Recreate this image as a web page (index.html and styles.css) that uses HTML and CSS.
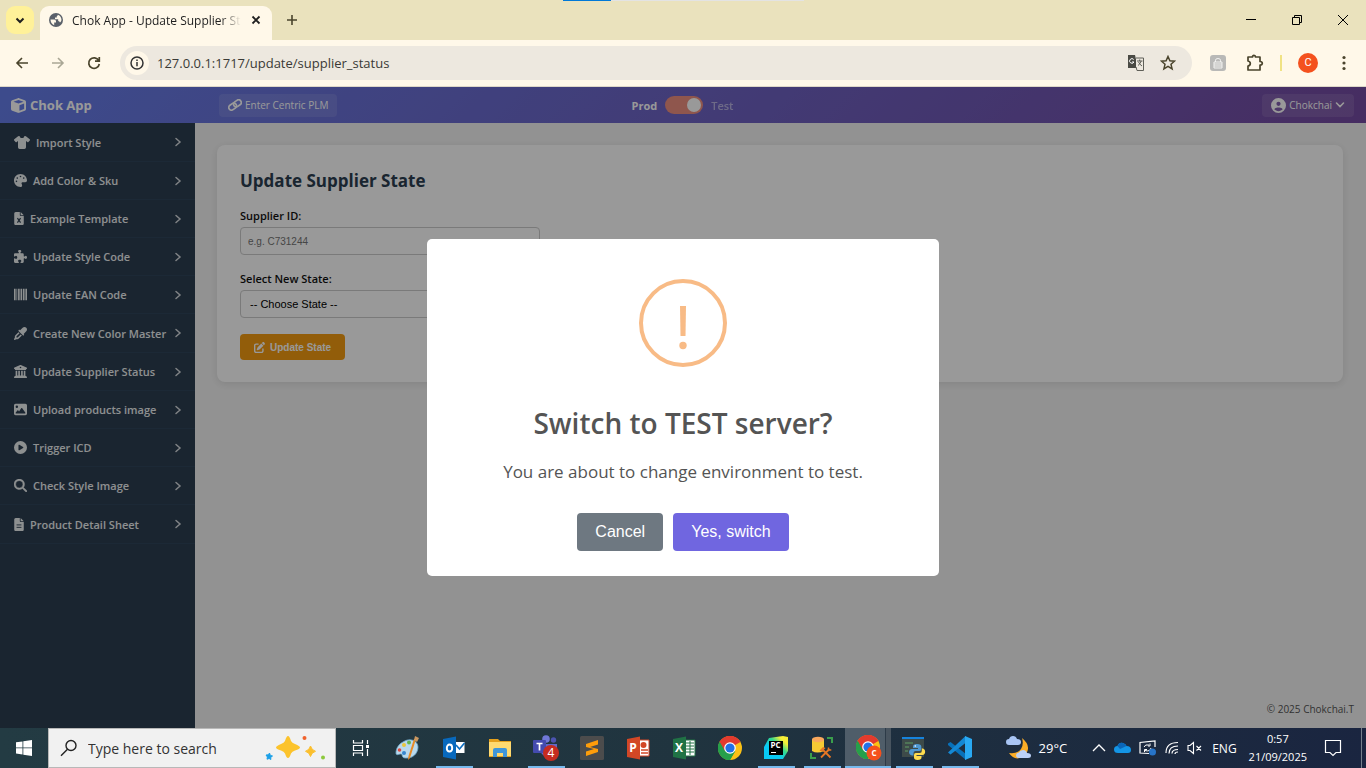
FILE: index.html
```html
<!DOCTYPE html>
<html lang="en">
<head>
<meta charset="utf-8">
<title>Chok App - Update Supplier State</title>
<link rel="stylesheet" href="styles.css">
</head>
<body>
<svg class="defs" aria-hidden="true">
  <symbol id="file" viewBox="0 0 384 512"><path d="M0 64C0 28.7 28.7 0 64 0H224V128c0 17.7 14.3 32 32 32H384V448c0 35.3-28.7 64-64 64H64c-35.3 0-64-28.7-64-64zM384 128H256V0z"/></symbol>
  <symbol id="chev" viewBox="0 0 8 12"><path d="M2 2.500l4 3.500L2 9.500" fill="none" stroke="currentColor" stroke-width="1.500" stroke-linecap="round"/></symbol>
  <symbol id="chrome" viewBox="0 0 24 24"><circle cx="12" cy="12" r="12" fill="#fbc116"/><path d="M12 12L1.600 6A12 12 0 0 1 22.400 6z" fill="#e33b2e"/><path d="M1.600 6A12 12 0 0 0 12 24l5.200-9L12 12z" fill="#269f4b"/><path d="M1.600 6A12 12 0 0 1 22.400 6H12L6.800 15z" fill="#e33b2e"/><path d="M1.600 6A12 12 0 0 0 12 24l5.200-9H6.800z" fill="#269f4b"/><circle cx="12" cy="12" r="5.800" fill="#fff"/><circle cx="12" cy="12" r="4.600" fill="#2371e7"/></symbol>
</svg>

<div class="tabstrip">
  <div class="load-track"><span></span></div>
  <button class="tab-search" aria-label="Search tabs"><svg width="10" height="10" viewBox="0 0 10 10"><path d="M1.500 3.500L5 7l3.500-3.500" fill="none" stroke="#1f1f1f" stroke-width="2"/></svg></button>
  <div class="tab">
    <svg width="14" height="14" viewBox="0 0 14 14"><circle cx="7" cy="7" r="7" fill="#5a6069"/><path d="M1.500 6.500h3.700q1.800 0 1.800 1.700v1.300h-1.800v2.700Q1.500 10.500 1.500 6.500zM8.800 1.800q3.600 1.300 3.700 5.200-.3 1.800-1.500 2.500-.4-1.500-1.800-1.500V6.300H6V4.500h1.800V3q1 0 1-1.200z" fill="#fff8e9"/></svg>
    <span class="tab-title">Chok App - Update Supplier State</span>
    <button class="plain" aria-label="Close tab"><svg width="10" height="10" viewBox="0 0 10 10"><path d="M1.500 1.500l7 7m0-7l-7 7" stroke="#1f1f1f" stroke-width="1.800"/></svg></button>
  </div>
  <button class="plain newtab" aria-label="New tab"><svg width="12" height="12" viewBox="0 0 12 12"><path d="M6 1v10M1 6h10" stroke="#4a442c" stroke-width="1.600"/></svg></button>
  <div class="window-buttons">
    <button class="plain" aria-label="Minimize"><svg width="12" height="12" viewBox="0 0 12 12"><path d="M1 5.500h10" stroke="#000"/></svg></button>
    <button class="plain" aria-label="Restore"><svg width="12" height="12" viewBox="0 0 12 12"><path d="M1.500 3.500h7v7h-7zM3.500 3.500v-2h7v7h-2" fill="none" stroke="#000"/></svg></button>
    <button class="plain" aria-label="Close"><svg width="12" height="12" viewBox="0 0 12 12"><path d="M1 1l10 10M11 1L1 11" stroke="#000"/></svg></button>
  </div>
</div>

<div class="toolbar">
  <button class="plain nav" aria-label="Back"><svg width="14" height="14" viewBox="0 0 14 14"><path d="M13 7H2M7 2L2 7l5 5" fill="none" stroke="#4a442c" stroke-width="1.600"/></svg></button>
  <button class="plain nav" aria-label="Forward"><svg width="14" height="14" viewBox="0 0 14 14"><path d="M1 7h11M7 2l5 5-5 5" fill="none" stroke="#aaa795" stroke-width="1.600"/></svg></button>
  <button class="plain nav" aria-label="Reload"><svg width="14" height="14" viewBox="0 0 14 14"><path d="M11.700 4.500A5.300 5.300 0 1 0 12.300 8M12.300 1v4.200H8" fill="none" stroke="#4a442c" stroke-width="1.700"/></svg></button>
  <div class="omnibox">
    <span class="site-info"><svg width="14" height="14" viewBox="0 0 14 14"><circle cx="7" cy="7" r="6" fill="none" stroke="#333" stroke-width="1.500"/><path d="M7 6v4.200M7 3.600v1.500" stroke="#333" stroke-width="1.500"/></svg></span>
    <input class="url" aria-label="Address" value="127.0.0.1:1717/update/supplier_status">
    <svg width="18" height="18" viewBox="0 0 18 18"><path d="M1 1h7l3 13H1z" fill="#4a4a44"/><path d="M9 4h7.500v12.500H10L9 13" fill="#ede8df" stroke="#5f5f58"/><path d="M6.700 5.500A2.300 2.300 0 1 0 7 8H5" fill="none" stroke="#fff"/><path d="M10 7h5.500M12.700 5.500V7m1.500 0q-1 3-3.200 4.500m.500-3.500q1.200 2.500 3.500 4" fill="none" stroke="#5f5f58"/></svg>
    <svg width="16" height="16" viewBox="0 0 16 16"><path d="M8 1.500l1.900 4.300 4.600.400-3.500 3.100 1.100 4.600L8 11.400l-4.100 2.500L5 9.300 1.500 6.200l4.600-.400z" fill="none" stroke="#4a442c" stroke-width="1.500"/></svg>
  </div>
  <div class="extensions">
    <svg class="lock" width="16" height="16" viewBox="0 0 16 16"><rect width="16" height="16" rx="3" fill="#b9b9b7"/><path d="M4 7h8v6H4zM5.500 7V5.200q0-1.700 2.500-1.700t2.500 1.700V7M4 9h8M4 11h8" fill="none" stroke="#f2f2f0"/></svg>
    <svg width="18" height="18" viewBox="0 0 18 18"><path d="M2 3h4.500q0-1.700 1.500-1.700T9.500 3H14v4.500q2.300 0 2.300 1.700T14 11v5H2v-4q2.300-.500 2.300-2.500T2 7z" fill="none" stroke="#4a442c" stroke-width="1.700" stroke-linejoin="round"/></svg>
    <span class="separator"></span>
    <span class="avatar">C</span>
    <svg width="4" height="16" viewBox="0 0 4 16" fill="#4a442c"><circle cx="2" cy="2.500" r="1.600"/><circle cx="2" cy="8" r="1.600"/><circle cx="2" cy="13.500" r="1.600"/></svg>
  </div>
</div>

<div class="viewport">
  <header class="app-header">
    <div class="header-left">
      <a class="brand" href="#"><svg width="15" height="15" viewBox="0 0 512 512"><path d="M234.500 5.700c13.900-5 29.100-5 43.100 0l192 68.600C495 83.400 512 107.500 512 134.600V377.400c0 27-17 51.200-42.500 60.300l-192 68.600c-13.900 5-29.100 5-43.100 0l-192-68.600C17 428.600 0 404.500 0 377.400V134.600c0-27 17-51.200 42.500-60.300zM256 66L82.300 128 256 190l173.700-62zm32 368.600l160-57.100v-188L288 246.600z"/></svg>Chok App</a>
      <a class="pill" href="#"><svg width="14" height="12" viewBox="0 0 14 12"><g fill="none" stroke="currentColor" stroke-width="1.700" transform="rotate(-35 7 6)"><rect x="0" y="3.300" width="8.200" height="5.400" rx="2.700"/><rect x="5.800" y="3.300" width="8.200" height="5.400" rx="2.700"/></g></svg>Enter Centric PLM</a>
    </div>
    <label class="env"><b>Prod</b><input type="checkbox" checked><span>Test</span></label>
    <button class="pill user"><svg width="15" height="15" viewBox="0 0 512 512"><path d="M399 384.200C376.900 345.800 335.400 320 288 320H224c-47.400 0-88.900 25.800-111 64.200c35.200 39.200 86.200 63.800 143 63.800s107.800-24.700 143-63.800zM0 256a256 256 0 1 1 512 0A256 256 0 1 1 0 256zm256 16a72 72 0 1 0 0-144 72 72 0 1 0 0 144z"/></svg>Chokchai<svg width="10" height="10" viewBox="0 0 10 10"><path d="M1.500 3L5 6.500 8.500 3" fill="none" stroke="currentColor" stroke-width="1.600" stroke-linecap="round"/></svg></button>
  </header>

  <div class="app-body">
    <nav class="sidebar">
      <a href="#"><svg width="16" height="13" viewBox="0 0 640 512"><path d="M211.800 0c7.800 0 14.300 5.700 16.700 13.200C240.800 51.900 277.100 80 320 80s79.200-28.100 91.500-66.800C413.900 5.700 420.400 0 428.200 0h12.600c22.500 0 44.200 7.900 61.500 22.300L628.500 127.400c6.600 5.500 10.700 13.500 11.400 22.100s-2.100 17.100-7.800 23.600l-56 64c-11.400 13.100-31.200 14.600-44.600 3.500L480 197.700V448c0 35.300-28.700 64-64 64H224c-35.300 0-64-28.700-64-64V197.700l-51.500 42.900c-13.300 11.100-33.100 9.600-44.600-3.500l-56-64c-5.700-6.500-8.500-15-7.800-23.600s4.800-16.600 11.400-22.100L137.700 22.300C155 7.900 176.700 0 199.200 0z"/></svg><span>Import Style</span><svg class="chev"><use href="#chev"/></svg></a>
      <a href="#"><svg width="13" height="13" viewBox="0 0 512 512"><path d="M512 256v2.700c-.400 36.500-33.600 61.300-70.100 61.300H344c-26.500 0-48 21.500-48 48c0 3.400.400 6.700 1 9.900c2.100 10.200 6.500 20 10.800 29.900c6.100 13.800 12.100 27.500 12.100 42c0 31.800-21.600 60.700-53.400 62c-3.500.100-7 .200-10.600.200C114.600 512 0 397.400 0 256S114.600 0 256 0S512 114.600 512 256zM128 288a32 32 0 1 0 -64 0 32 32 0 1 0 64 0zm0-96a32 32 0 1 0 0-64 32 32 0 1 0 0 64zM288 96a32 32 0 1 0 -64 0 32 32 0 1 0 64 0zm96 96a32 32 0 1 0 0-64 32 32 0 1 0 0 64z"/></svg><span>Add Color &amp; Sku</span><svg class="chev"><use href="#chev"/></svg></a>
      <a href="#"><svg width="10" height="13" viewBox="0 0 384 512"><use href="#file"/><path d="M130 240l124 180m0-180L130 420" stroke="#2c3e50" stroke-width="46"/></svg><span>Example Template</span><svg class="chev"><use href="#chev"/></svg></a>
      <a href="#"><svg width="13" height="13" viewBox="0 0 512 512"><path d="M192 104.800c0-9.200-5.800-17.300-13.200-22.800C167.200 73.300 160 61.300 160 48c0-26.500 28.700-48 64-48s64 21.500 64 48c0 13.300-7.200 25.300-18.800 34c-7.400 5.500-13.200 13.600-13.200 22.800c0 12.800 10.400 23.200 23.200 23.200H336c26.500 0 48 21.500 48 48v56.800c0 12.800 10.400 23.200 23.200 23.200c9.200 0 17.300-5.800 22.800-13.200c8.700-11.600 20.700-18.800 34-18.800c26.500 0 48 28.700 48 64s-21.500 64-48 64c-13.300 0-25.300-7.200-34-18.800c-5.500-7.400-13.600-13.200-22.800-13.200c-12.800 0-23.200 10.400-23.200 23.200V464c0 26.500-21.500 48-48 48H279.200c-12.800 0-23.200-10.400-23.200-23.200c0-9.200 5.800-17.300 13.200-22.800c11.600-8.700 18.800-20.700 18.800-34c0-26.500-28.700-48-64-48s-64 21.500-64 48c0 13.300 7.200 25.300 18.800 34c7.400 5.500 13.200 13.600 13.200 22.800c0 12.800-10.400 23.200-23.200 23.200H48c-26.500 0-48-21.500-48-48V343.200C0 330.400 10.400 320 23.200 320c9.200 0 17.300 5.800 22.800 13.200C54.700 344.800 66.700 352 80 352c26.500 0 48-28.700 48-64s-21.500-64-48-64c-13.300 0-25.300 7.200-34 18.800C40.500 250.200 32.400 256 23.200 256C10.400 256 0 245.600 0 232.800V176c0-26.500 21.500-48 48-48H168.800c12.800 0 23.200-10.400 23.200-23.200z"/></svg><span>Update Style Code</span><svg class="chev"><use href="#chev"/></svg></a>
      <a href="#"><svg width="13" height="13" viewBox="0 0 512 512"><path d="M0 32h64v448H0zM96 32h32v448H96zM160 32h64v448h-64zM256 32h64v448h-64zM352 32h64v448h-64zM448 32h64v448h-64z"/></svg><span>Update EAN Code</span><svg class="chev"><use href="#chev"/></svg></a>
      <a href="#"><svg width="13" height="13" viewBox="0 0 512 512"><path d="M341.600 29.200L240.100 130.800l-9.400-9.400c-12.500-12.500-32.800-12.500-45.300 0s-12.500 32.800 0 45.300l160 160c12.500 12.500 32.800 12.500 45.300 0s12.500-32.800 0-45.300l-9.400-9.400L482.800 170.400c39-39 39-102.200 0-141.100s-102.200-39-141.100 0zM55.400 323.300c-15 15-23.400 35.400-23.400 56.600v42.400L5.400 462.200c-8.500 12.700-6.800 29.600 4 40.400s27.700 12.500 40.400 4L89.700 480h42.400c21.200 0 41.600-8.400 56.600-23.400L309.400 335.900l-45.300-45.300L143.400 411.300c-3 3-7.100 4.700-11.300 4.700H96V379.900c0-4.200 1.700-8.300 4.700-11.300L221.400 247.900l-45.300-45.300z"/></svg><span>Create New Color Master</span><svg class="chev"><use href="#chev"/></svg></a>
      <a href="#"><svg width="13" height="13" viewBox="0 0 512 512"><path d="M243.400 2.600l-224 96c-14 6-21.800 21-18.700 35.800S16.800 160 32 160v8c0 13.300 10.700 24 24 24H456c13.300 0 24-10.700 24-24v-8c15.200 0 28.300-10.700 31.300-25.600s-4.800-29.900-18.700-35.800l-224-96c-8-3.400-17.200-3.400-25.200 0zM128 224H64V420.300c-.600.300-1.200.700-1.800 1.100l-48 32c-11.700 7.800-17 22.400-12.900 35.900S17.900 512 32 512H480c14.100 0 26.500-9.200 30.600-22.700s-1.100-28.100-12.900-35.900l-48-32c-.600-.400-1.200-.700-1.800-1.100V224H384V416H344V224H280V416H232V224H168V416H128zM256 64a32 32 0 1 1 0 64 32 32 0 1 1 0-64z"/></svg><span>Update Supplier Status</span><svg class="chev"><use href="#chev"/></svg></a>
      <a href="#"><svg width="13" height="13" viewBox="0 0 512 512"><path fill-rule="evenodd" d="M0 96C0 60.700 28.700 32 64 32H448c35.300 0 64 28.700 64 64V416c0 35.300-28.700 64-64 64H64c-35.300 0-64-28.700-64-64zM323.800 202.500c-4.500-6.600-11.900-10.500-19.800-10.500s-15.400 3.900-19.800 10.500l-87 127.600L170.700 297c-4.600-5.700-11.500-9-18.700-9s-14.200 3.300-18.700 9l-64 80c-5.800 7.200-6.900 17.100-2.900 25.400s12.400 13.600 21.600 13.600H424c8.900 0 17.100-4.900 21.200-12.800s3.600-17.400-1.400-24.700zM112 192a48 48 0 1 0 0-96 48 48 0 1 0 0 96z"/></svg><span>Upload products image</span><svg class="chev"><use href="#chev"/></svg></a>
      <a href="#"><svg width="13" height="13" viewBox="0 0 512 512"><path fill-rule="evenodd" d="M0 256a256 256 0 1 1 512 0A256 256 0 1 1 0 256zM188.300 147.100c-7.600 4.200-12.300 12.300-12.300 20.900V344c0 8.700 4.700 16.700 12.300 20.900s16.800 4.100 24.300-.500l144-88c7.100-4.400 11.500-12.100 11.500-20.500s-4.400-16.100-11.500-20.500l-144-88c-7.400-4.500-16.700-4.700-24.300-.500z"/></svg><span>Trigger ICD</span><svg class="chev"><use href="#chev"/></svg></a>
      <a href="#"><svg width="13" height="13" viewBox="0 0 512 512"><path stroke="#ecf0f1" stroke-width="16" d="M416 208c0 45.900-14.900 88.300-40 122.700L502.600 457.400c12.500 12.500 12.500 32.800 0 45.300s-32.800 12.500-45.300 0L330.700 376c-34.400 25.200-76.800 40-122.700 40C93.100 416 0 322.900 0 208S93.100 0 208 0S416 93.100 416 208zM208 352a144 144 0 1 0 0-288 144 144 0 1 0 0 288z"/></svg><span>Check Style Image</span><svg class="chev"><use href="#chev"/></svg></a>
      <a href="#"><svg width="10" height="13" viewBox="0 0 384 512"><use href="#file"/><path d="M96 272h192M96 368h192" stroke="#2c3e50" stroke-width="36"/></svg><span>Product Detail Sheet</span><svg class="chev"><use href="#chev"/></svg></a>
    </nav>

    <main>
      <form class="card">
        <h2>Update Supplier State</h2>
        <label for="sid">Supplier ID:</label>
        <input id="sid" class="field" type="text" placeholder="e.g. C731244">
        <label for="state">Select New State:</label>
        <select id="state" class="field"><option>-- Choose State --</option></select>
        <button type="button" class="submit"><svg width="11" height="11" viewBox="0 0 512 512"><path d="M471.600 21.700c-21.900-21.900-57.300-21.900-79.200 0L362.300 51.700l97.900 97.900 30.100-30.100c21.900-21.900 21.900-57.300 0-79.200zm-299.200 220c-6.100 6.100-10.800 13.600-13.500 21.900l-29.600 88.800c-2.900 8.600-.600 18.100 5.800 24.600s15.900 8.700 24.600 5.800l88.800-29.600c8.200-2.700 15.700-7.400 21.900-13.500L437.700 172.300 339.700 74.300zM96 64C43 64 0 107 0 160V416c0 53 43 96 96 96H352c53 0 96-43 96-96V320c0-17.700-14.300-32-32-32s-32 14.300-32 32v96c0 17.700-14.300 32-32 32H96c-17.700 0-32-14.300-32-32V160c0-17.700 14.300-32 32-32h96c17.700 0 32-14.300 32-32s-14.300-32-32-32z"/></svg>Update State</button>
      </form>
      <footer>© 2025 Chokchai.T</footer>
    </main>
  </div>

  <div class="overlay">
    <div class="dialog" role="dialog" aria-labelledby="dlg-title">
      <svg width="88" height="88" viewBox="0 0 88 88"><circle cx="44" cy="44" r="42" fill="none" stroke="#f8bb86" stroke-width="4"/><path d="M41 27h6l-.5 30h-5z" fill="#f8bb86"/><circle cx="44" cy="66.500" r="3.700" fill="#f8bb86"/></svg>
      <h1 id="dlg-title">Switch to TEST server?</h1>
      <p>You are about to change environment to test.</p>
      <div class="actions"><button class="cancel">Cancel</button><button class="confirm">Yes, switch</button></div>
    </div>
  </div>
</div>

<div class="taskbar">
  <button class="start" aria-label="Start"><svg width="16" height="16" viewBox="0 0 16 16" fill="#fff"><path d="M0 2.300l6.500-.9v6.100H0zM7.300 1.300L16 0v7.500H7.300zM0 8.300h6.500v6.200L0 13.600zM7.300 8.300H16V16l-8.700-1.300z"/></svg></button>
  <label class="search">
    <svg width="18" height="18" viewBox="0 0 18 18"><circle cx="11" cy="6.500" r="5" fill="none" stroke="#222" stroke-width="1.400"/><path d="M7.500 10.200L1 16.700" stroke="#222" stroke-width="1.400"/></svg>
    <input type="text" placeholder="Type here to search" aria-label="Search">
    <svg width="62" height="26" viewBox="0 0 62 26"><path d="M24 1q1.500 0 3 5 1 2 4 3 5 2 5 3.500t-5 3q-3 1-4 3-1.500 4.500-3 4.500t-3-4.500q-1-2-4-3-5-1.500-5-3t5-3.500q3-1 4-3 1.500-5 3-5z" fill="#fcc32c"/><path d="M46.500 11q1 4 5 5.300-4 1.200-5 5.200-1-4-5-5.200 4-1.300 5-5.300z" fill="#fbbf2d" stroke="#fbbf2d"/><path d="M5.500 18l.8 2.400 2.200.600-1.800 1.400.2 2.100-1.800-1-2.100.700.400-2.200L2 20l2.400-.2z" fill="#1ba0e8" stroke="#1ba0e8"/><circle cx="40.500" cy="3" r="2" fill="#f0622d"/><circle cx="59" cy="22.500" r="2" fill="#8cc83c"/></svg>
  </label>
  <div class="apps">
    <button class="view" aria-label="Task View"><svg width="18" height="16" viewBox="0 0 18 16" fill="none" stroke="#fff" stroke-width="1.200"><path d="M1.500 0v3h9V0M1.500 5.500h9v5h-9zM1.500 16v-3h9v3M15.500 0v4M15.500 9v7"/><path d="M14 5h3v3h-3z" fill="#fff" stroke="none"/></svg></button>
    <button aria-label="Paint"><svg width="26" height="24" viewBox="0 0 26 24"><path d="M8 6C15 1 23 5 23 11s-5 12-13 11c-4-.5-2-4-4-4s-5 2-5-1C1 12 4 8 8 6z" fill="#b9d9ec" stroke="#6da7c8" stroke-width=".8"/><circle cx="9" cy="9" r="2" fill="#e9c63b"/><circle cx="14" cy="6.500" r="2" fill="#62b44f"/><circle cx="4.500" cy="14" r="1.800" fill="#de493e"/><circle cx="9" cy="17" r="2" fill="#3787cf"/><path d="M21 3l-6 19-2 2 .5-4L19 3z" fill="#e88b25"/><path d="M19 4l1-4 4 2-2 4z" fill="#c99761"/></svg></button>
    <button class="open" aria-label="Outlook"><svg width="24" height="24" viewBox="0 0 24 24"><path d="M13 6h9.500v11H13z" fill="#fff"/><path d="M14 9l3.500 4L22.500 7" fill="none" stroke="#0f6fc0" stroke-width="1.700"/><path d="M1 3l13-2.500v23L1 21z" fill="#0869bd"/><ellipse cx="7.500" cy="12" rx="2.700" ry="3.500" fill="none" stroke="#fff" stroke-width="1.900"/></svg></button>
    <button aria-label="File Explorer"><svg width="24" height="22" viewBox="0 0 24 22"><path d="M1 2h9l2 2h11v16H1z" fill="#e5a01b"/><path d="M1 5h22v14H1z" fill="#ffda70"/><path d="M5 20v-7q0-2 2-2h10q2 0 2 2v7h-4v-4H9v4z" fill="#3f96d9"/></svg></button>
    <button class="open" aria-label="Teams"><svg width="28" height="26" viewBox="0 0 28 26"><circle cx="14" cy="4" r="3.800" fill="#7078d8"/><circle cx="21.500" cy="5" r="2.700" fill="#4c54b0"/><path d="M8 9h17v7q-2 6-8 6t-9-6z" fill="#6069c8"/><rect x="1" y="5" width="13" height="13" rx="1" fill="#444baf"/><path d="M4.500 8.500h6M7.500 8.500v7" stroke="#fff" stroke-width="1.700"/><circle cx="19" cy="18" r="8" fill="#c52b20"/><text x="19" y="22" class="badge">4</text></svg></button>
    <button aria-label="Sublime Text"><svg width="24" height="24" viewBox="0 0 24 24"><rect width="24" height="24" rx="1.500" fill="#4c4c4c"/><path d="M6 8l12-4v4.500L10 11l8 2v3L6 20v-4.500L14 13l-8-2z" fill="#ff9d0a"/></svg></button>
    <button aria-label="PowerPoint"><svg width="24" height="24" viewBox="0 0 24 24"><path d="M13 4h10v16H13z" fill="#fff" stroke="#d24726"/><path d="M15 14h7M15 17h7" stroke="#d24726" stroke-width="1.500"/><circle cx="17.500" cy="9" r="3" fill="#d24726"/><path d="M1 3l13-2.500v23L1 21z" fill="#d24726"/><text x="7" y="16" class="letter">P</text></svg></button>
    <button aria-label="Excel"><svg width="24" height="24" viewBox="0 0 24 24"><path d="M13 4h10v16H13z" fill="#fff" stroke="#207245"/><path d="M14 7h8M14 10h8M14 13h8M14 16h8M18 5v14" stroke="#207245"/><path d="M1 3l13-2.500v23L1 21z" fill="#207245"/><text x="7" y="16" class="letter">X</text></svg></button>
    <button aria-label="Chrome"><svg width="24" height="24"><use href="#chrome"/></svg></button>
    <button class="open" aria-label="PyCharm"><svg width="24" height="24" viewBox="0 0 24 24"><defs><linearGradient id="pc" x1="0" y1="1" x2="1" y2="0"><stop offset=".35" stop-color="#08c9f5"/><stop offset=".6" stop-color="#35d98b"/><stop offset=".8" stop-color="#f6ee37"/></linearGradient></defs><path d="M5 2l14-2 5 1v14l-5 8H0V11z" fill="url(#pc)"/><path d="M5 5h14v14H5z" fill="#000"/><text x="11.500" y="12" class="small">PC</text><path d="M7 16.500h5" stroke="#fff"/></svg></button>
    <button class="open" aria-label="Database tool"><svg width="24" height="24" viewBox="0 0 24 24"><path d="M2 3v12q5 3 12 0V3z" fill="#f6c934"/><ellipse cx="8" cy="3.500" rx="6" ry="2.700" fill="#f9a85d"/><path d="M17 2h5v5M1 17v5h5" fill="none" stroke="#3a9e4c" stroke-width="2"/><path d="M11 21.500l8.500-8.500M13 14l7.500 7.500" stroke="#e77724" stroke-width="1.800"/><path d="M9.500 14.500l3.500-3.500 2.500 1-3.500 3.800z" fill="#e77724"/><path d="M18.500 11.500v2.500h2.800" fill="none" stroke="#e77724" stroke-width="1.500"/></svg></button>
    <button class="open active" aria-label="Chrome, Chok App"><svg width="28" height="26" viewBox="0 0 28 26"><use href="#chrome" x="2" y="0" width="24" height="24"/><circle cx="20" cy="18" r="7.500" fill="#f4511e"/><text x="20" y="21" class="small">C</text></svg></button>
    <button class="open" aria-label="Python"><svg width="24" height="24" viewBox="0 0 24 24"><path d="M0 1h22v20H0z" fill="#3d4a49"/><path d="M0 1h22v2H0z" fill="#1683dd"/><path d="M3 7h8M3 11h4M3 15h3" stroke="#4e7456" stroke-width="2"/><path d="M15 8c-3 0-4 1-4 2.500V12h5v1h-6c-4 0-4 6 0 6.500h1.500V17q0-2 2-2h4q1.800 0 1.800-2v-2.500C19.300 9 18 8 15 8z" fill="#4f97d0"/><path d="M15.500 24c3 0 4-1 4-2.500V20h-5v-1h6c3.500 0 3.500-6 .3-6.500h-1V15q0 2-2 2h-4q-1.800 0-1.800 2v2.500c0 1.500 1 2.500 3.500 2.500z" fill="#ffdc4e"/><circle cx="13.300" cy="10" r=".8" fill="#fff"/></svg></button>
    <button class="open" aria-label="Visual Studio Code"><svg width="24" height="24" viewBox="0 0 24 24"><path d="M0 7.500L2.500 6 18 18v6L0 9z" fill="#0871ba"/><path d="M0 16.500L17.500 0v7L2.500 18.500z" fill="#1488d4"/><path d="M17 0l7 3v18l-7 3z" fill="#29a9f3"/></svg></button>
  </div>
  <div class="tray">
    <svg width="25" height="24" viewBox="0 0 25 24"><path d="M16 2q11 9 2 18Q9 26 3 17q9 1 12-4t1-11z" fill="#fbad27"/><path d="M3 9q-3 0-3-3t3-3q1-3 4-3t4 3q4 0 4 3t-3 3z" fill="#a9c5f4"/><path d="M13 22q-3 0-3-2.500t3-3Q14 14 17 14t4 3q4 0 4 2.500T22 22z" fill="#bcd1f7"/></svg>
    <span class="temp">29°C</span>
    <svg width="14" height="10" viewBox="0 0 14 10"><path d="M1 8l6-6 6 6" fill="none" stroke="#fff" stroke-width="1.300"/></svg>
    <svg width="17" height="12" viewBox="0 0 17 12"><path d="M4 11Q0 11 0 7.500T3.500 4Q5 0 9 1q3 1 3.500 3 4.500 0 4.500 4 0 3-3 3z" fill="#1495e6"/><path d="M3.500 4Q5 0 9 1q3 1 3.500 3L6 7z" fill="#0a66b8"/></svg>
    <svg width="18" height="16" viewBox="0 0 18 16"><path d="M16 7V1L1 2.500V13l9 .5" fill="none" stroke="#fff" stroke-width="1.200"/><path d="M5 7q1-3 5-2m1-1.500V6H9M12 8q-1 4-6 2.500M5.500 12V9.500H8" fill="none" stroke="#fff"/><circle cx="13.500" cy="12" r="3.500" fill="#2774c9"/></svg>
    <svg width="14" height="14" viewBox="0 0 14 14" fill="none" stroke="#fff" stroke-width="1.200"><path d="M1 12Q1 1.500 13 1.500M4 12.500Q4 5 13 5M7 12.500Q7 8.500 13 8.500M10 13q0-2 3-2"/></svg>
    <svg width="15" height="14" viewBox="0 0 15 14" fill="none" stroke="#fff" stroke-width="1.100"><path d="M1 4.500h2L6.500 1.500v11L3 9.500H1zM9.500 5l4.500 4.500M14 5L9.500 9.500"/></svg>
    <span class="lang">ENG</span>
    <span class="clock">0:57<br>21/09/2025</span>
    <svg width="18" height="18" viewBox="0 0 18 18"><path d="M1.500 1.500h15v12H12L9 16.500 6 13.500H1.500z" fill="none" stroke="#fff" stroke-width="1.200"/></svg>
  </div>
</div>
</body>
</html>
```

FILE: styles.css
```css
* { box-sizing: border-box; }
body {
  margin: 0;
  height: 100vh;
  display: flex;
  flex-direction: column;
  overflow: hidden;
  font-family: "Open Sans", "Noto Sans", sans-serif;
  font-size: 12px;
  background: #fff8e9;
}
svg { display: block; flex: none; }
.defs { width: 0; height: 0; position: absolute; }
button { font: inherit; border: 0; cursor: pointer; }
a { color: inherit; text-decoration: none; }
.plain { background: none; padding: 0; display: grid; place-items: center; }

/* Browser window */
.tabstrip {
  position: relative;
  flex: none;
  height: 40px;
  display: flex;
  align-items: center;
  padding-left: 6px;
  background: #eae2bd;
}
.load-track {
  position: absolute;
  top: 0;
  left: 50%;
  width: 241px;
  height: 1px;
  margin-left: -120px;
  background: #e3e3e3;
}
.load-track span { display: block; width: 20%; height: 1px; background: #0078d7; }
.tab-search {
  width: 28px;
  height: 28px;
  border-radius: 9px;
  background: #fff199;
  display: grid;
  place-items: center;
  padding: 0;
}
.tab {
  align-self: stretch;
  width: 232px;
  margin: 6px 0 0 6px;
  padding: 0 11px 6px 9px;
  display: flex;
  align-items: center;
  border-radius: 9px 9px 0 0;
  background: #fff8e9;
  color: #1f1f1f;
}
.tab-title {
  flex: 1;
  margin: 0 10px 0 9px;
  overflow: hidden;
  white-space: nowrap;
  mask-image: linear-gradient(90deg, #000 88%, transparent);
}
.newtab { margin-left: 14px; }
.window-buttons { margin-left: auto; display: flex; }
.window-buttons button { width: 46px; height: 40px; }
.toolbar {
  flex: none;
  height: 47px;
  display: flex;
  align-items: center;
  padding: 0 20px 0 4px;
  background: #fff8e9;
  border-bottom: 1px solid #ddd7c8;
}
.nav { width: 36px; height: 36px; }
.omnibox {
  flex: 1;
  height: 34px;
  margin-left: 8px;
  padding: 0 16px 0 5px;
  display: flex;
  align-items: center;
  gap: 15px;
  border-radius: 17px;
  background: #ede8df;
}
.site-info {
  width: 24px;
  height: 24px;
  display: grid;
  place-items: center;
  border-radius: 12px;
  background: #fff8e9;
}
.url {
  flex: 1;
  min-width: 0;
  margin-left: -7px;
  padding: 0;
  border: 0;
  background: none;
  font: 13px "Open Sans", sans-serif;
  color: #3a3a36;
}
.extensions { display: flex; align-items: center; gap: 16px; margin-left: 18px; }
.lock { margin-right: 4px; }
.separator { width: 2px; height: 16px; background: #f0e284; }
.avatar {
  width: 20px;
  height: 20px;
  margin-right: 8px;
  border-radius: 10px;
  background: #f4511e;
  color: #fff;
  font: 11px/20px Roboto, sans-serif;
  text-align: center;
}

/* Application */
.viewport { position: relative; flex: 1; min-height: 0; display: flex; flex-direction: column; }
.app-header {
  flex: none;
  height: 36px;
  padding: 0 12px 0 11px;
  display: grid;
  grid-template-columns: 1fr auto 1fr;
  align-items: center;
  background: linear-gradient(135deg, #667eea, #764ba2);
  color: #fff;
  fill: #fff;
}
.header-left { display: flex; align-items: center; }
.brand { width: 208px; display: flex; align-items: center; gap: 4px; font-size: 13px; font-weight: 700; }
.pill {
  height: 23px;
  padding: 0 9px;
  display: flex;
  align-items: center;
  gap: 3px;
  border-radius: 4px;
  background: rgba(255, 255, 255, .1);
  color: #fff;
  fill: #fff;
  font-size: 10px;
}
.user { justify-self: end; }
.env { display: flex; align-items: center; gap: 8px; font-size: 11px; font-weight: 600; }
.env b { font-weight: 700; }
.env span { opacity: .5; }
.env input {
  appearance: none;
  width: 38px;
  height: 18px;
  margin: 0;
  padding: 2px;
  display: flex;
  justify-content: flex-end;
  border-radius: 9px;
  background: #ee8f80;
}
.env input::before { content: ""; width: 14px; height: 14px; border-radius: 7px; background: #fff; }
.app-body { flex: 1; min-height: 0; display: flex; }
.sidebar {
  width: 195px;
  display: flex;
  flex-direction: column;
  background: #2c3e50;
  color: #ecf0f1;
  fill: #ecf0f1;
  font-size: 11px;
  font-weight: 600;
  white-space: nowrap;
}
.sidebar a {
  min-height: 38px;
  display: flex;
  align-items: center;
  gap: 6px;
  padding: 0 13px 0 14px;
  border-bottom: 1px solid #30455a;
}
.sidebar a:nth-child(5n + 1) { min-height: 39px; }
.sidebar .chev { width: 8px; height: 12px; margin-left: auto; color: #d5dade; }
main { flex: 1; display: flex; flex-direction: column; padding: 22px 23px 0 22px; background: #f4f4f4; }
.card {
  display: flex;
  flex-direction: column;
  align-items: flex-start;
  padding: 22px 23px;
  border-radius: 8px;
  background: #fff;
  box-shadow: 0 2px 8px rgba(0, 0, 0, .1);
}
.card h2 { margin: 0 0 13px; font-size: 17px; line-height: 28px; color: #2c3e50; }
.card label { margin-bottom: 3px; font-size: 11px; line-height: 16px; font-weight: 600; color: #111; }
.field {
  width: 300px;
  max-width: 100%;
  height: 28px;
  margin-bottom: 16px;
  padding: 0 7px;
  border: 1px solid #ccc;
  border-radius: 4px;
  background: #fff;
  font: 10px "Liberation Sans", sans-serif;
}
select.field { appearance: none; padding: 0 9px; font-size: 11px; color: #000; }
.submit {
  height: 26px;
  padding: 0 14px;
  display: flex;
  align-items: center;
  gap: 5px;
  border-radius: 4px;
  background: #f39c12;
  color: #fff;
  fill: #fff;
  font: bold 10px "Liberation Sans", sans-serif;
}
footer { margin: auto -11px 10px 0; text-align: right; font-size: 10px; line-height: 18px; color: #555; }

/* Confirmation dialog */
.overlay {
  position: absolute;
  inset: 0;
  display: grid;
  place-items: center;
  background: rgba(0, 0, 0, .4);
}
.dialog {
  width: 512px;
  max-width: 100%;
  padding: 40px 20px 25px;
  display: flex;
  flex-direction: column;
  align-items: center;
  border-radius: 5px;
  background: #fff;
  color: #545454;
}
.dialog h1 { margin: 34px 0 15px; font-size: 28px; line-height: 44px; font-weight: 600; }
.dialog p { margin: 0; font-size: 17px; line-height: 24px; }
.actions { display: flex; gap: 10px; margin-top: 29px; }
.actions button {
  height: 38px;
  padding: 0 18px;
  border-radius: 4px;
  color: #fff;
  font: 16px "Liberation Sans", sans-serif;
}
.cancel { background: #6e7881; }
.confirm { background: #7066e0; }

/* Taskbar */
.taskbar {
  flex: none;
  height: 40px;
  display: flex;
  background: linear-gradient(90deg, #233b43, #20343f 50%, #1a2540);
  color: #fff;
}
.start { width: 48px; padding: 0; display: grid; place-items: center; background: none; }
.search {
  width: 288px;
  padding: 0 9px 0 11px;
  display: flex;
  align-items: center;
  gap: 10px;
  border: 1px solid #b8b8b8;
  background: #f1f1f1;
}
.search input {
  flex: 1;
  min-width: 0;
  padding: 0;
  border: 0;
  background: none;
  font: 14px "Open Sans", sans-serif;
}
.search input::placeholder { color: #333; }
.apps { display: flex; }
.apps button {
  width: 46px;
  padding: 0;
  display: grid;
  place-items: center;
  background: none;
}
.apps .view { width: 49px; }
.apps .open { background: linear-gradient(#76b9ed, #76b9ed) center bottom / 37px 2px no-repeat; }
.apps .active {
  background: linear-gradient(#76b9ed, #76b9ed) center bottom / 100% 2px no-repeat, linear-gradient(90deg, #4f5d69 40px, #2d3b48 40px, #2d3b48 41px, #48545f 41px);
}
.badge { font: 12px "Open Sans", sans-serif; fill: #fff; text-anchor: middle; }
.letter { font: bold 12px "Open Sans", sans-serif; fill: #fff; text-anchor: middle; }
.small { font: bold 8px "Open Sans", sans-serif; fill: #fff; text-anchor: middle; }
.tray {
  margin: 0 4px 0 auto;
  padding-right: 19px;
  display: flex;
  align-items: center;
  gap: 8px;
  border-right: 1px solid #74808c;
}
.temp { font-size: 13px; margin-right: 17px; }
.lang { margin-left: 2px; }
.clock { font-size: 11px; line-height: 18px; text-align: center; margin: 0 9px 0 4px; }
```
